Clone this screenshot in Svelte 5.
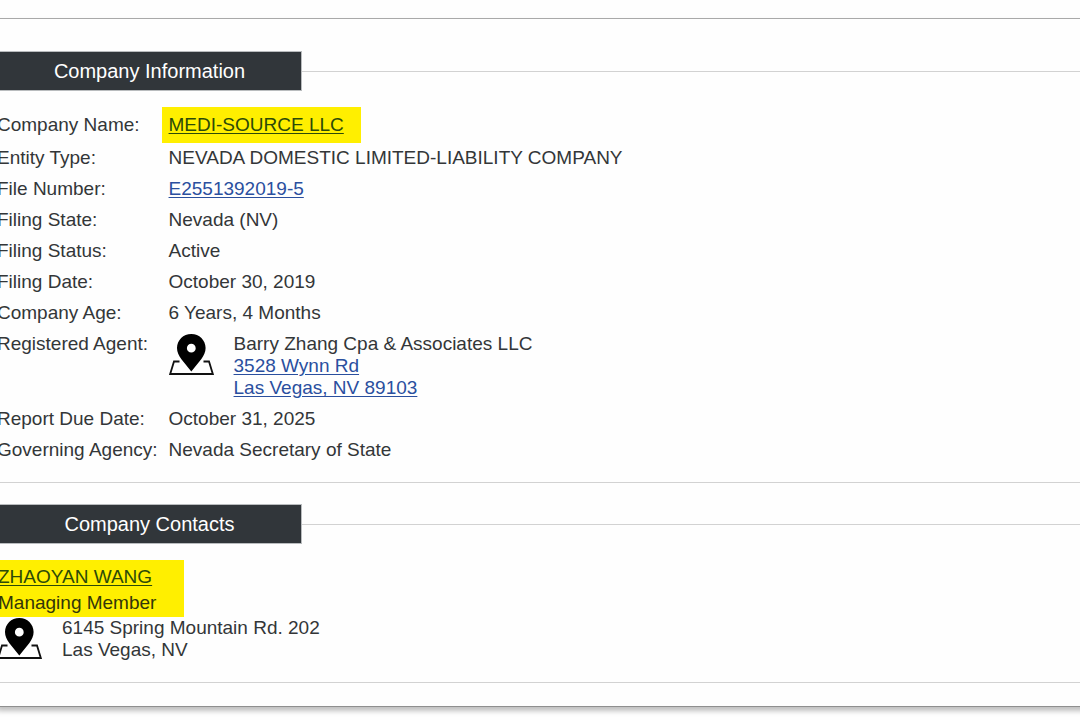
<script lang="ts">
  type Row = {
    label: string
    value?: string
    href?: string
    marked?: boolean
    agent?: { name: string; address: string[] }
  }

  const rows: Row[] = [
    { label: 'Company Name:', value: 'MEDI-SOURCE LLC', href: '#company', marked: true },
    { label: 'Entity Type:', value: 'NEVADA DOMESTIC LIMITED-LIABILITY COMPANY' },
    { label: 'File Number:', value: 'E2551392019-5', href: '#file' },
    { label: 'Filing State:', value: 'Nevada (NV)' },
    { label: 'Filing Status:', value: 'Active' },
    { label: 'Filing Date:', value: 'October 30, 2019' },
    { label: 'Company Age:', value: '6 Years, 4 Months' },
    {
      label: 'Registered Agent:',
      agent: {
        name: 'Barry Zhang Cpa & Associates LLC',
        address: ['3528 Wynn Rd', 'Las Vegas, NV 89103']
      }
    },
    { label: 'Report Due Date:', value: 'October 31, 2025' },
    { label: 'Governing Agency:', value: 'Nevada Secretary of State' }
  ]

  const contact = {
    name: 'ZHAOYAN WANG',
    role: 'Managing Member',
    address: ['6145 Spring Mountain Rd. 202', 'Las Vegas, NV']
  }
</script>

{#snippet pin()}
  <svg class="pin" viewBox="0 0 45 41" aria-hidden="true">
    <path d="M10.5 27.5H5L1.2 40H43.8L40 27.5H34.5" fill="none" stroke="#111" stroke-width="1.8" />
    <path
      fill="#000"
      fill-rule="evenodd"
      d="M22.3 0C14.3 0 8 6.2 8 14c0 4.2 1.8 7.6 4.4 11.2L22.3 37.5l9.9-12.3C34.8 21.6 36.6 18.2 36.6 14 36.6 6.2 30.3 0 22.3 0zm0 9.8a4.4 4.4 0 1 1 0 8.8 4.4 4.4 0 0 1 0-8.8z"
    />
  </svg>
{/snippet}

<main class="panel">
  <section>
    <div class="heading">
      <h2>Company Information</h2>
    </div>
    <table>
      <tbody>
        {#each rows as row}
          <tr>
            <th scope="row">{row.label}</th>
            <td>
              {#if row.agent}
                <div class="location">
                  {@render pin()}
                  <div>
                    {row.agent.name}
                    {#each row.agent.address as line}
                      <br /><a href="#map">{line}</a>
                    {/each}
                  </div>
                </div>
              {:else if row.marked}
                <mark class="name-mark"><a href={row.href}>{row.value}</a></mark>
              {:else if row.href}
                <a href={row.href}>{row.value}</a>
              {:else}
                {row.value}
              {/if}
            </td>
          </tr>
        {/each}
      </tbody>
    </table>
  </section>

  <section>
    <div class="heading">
      <h2>Company Contacts</h2>
    </div>
    <mark class="contact-mark">
      <a href="#contact">{contact.name}</a><br />
      {contact.role}
    </mark>
    <div class="location">
      {@render pin()}
      <address>
        {contact.address[0]}<br />
        {contact.address[1]}
      </address>
    </div>
  </section>
</main>

<style>
  :global(body) {
    background: #fefefe;
    overflow: hidden;
  }

  .panel {
    margin: 18px -10px 14px -3px;
    padding-bottom: 23px;
    border-top: 1px solid #a9a9a9;
    border-bottom: 1px solid #8f8f8f;
    background: #fefefe;
    box-shadow: 0 4px 5px rgba(0, 0, 0, 0.25);
    color: #333638;
    font-family: 'Liberation Sans', Arial, Helvetica, sans-serif;
    font-size: 19px;
    line-height: 22px;
  }

  section {
    padding: 32px 0 12px;
    border-bottom: 1px solid #d2d2d2;
  }

  section + section {
    padding: 21px 0 21px;
  }

  .heading {
    display: flex;
    align-items: center;
  }

  .heading::after {
    content: '';
    flex: 1;
    border-top: 1px solid #d2d2d2;
  }

  h2 {
    box-sizing: border-box;
    width: 305px;
    margin: 0;
    padding: 8px 12px;
    border: 1px solid #b9bcbe;
    background: #31363a;
    color: #fff;
    font-size: 20px;
    font-weight: 400;
    line-height: 22px;
    text-align: center;
  }

  table {
    margin-top: 23px;
    border-collapse: collapse;
  }

  th,
  td {
    padding: 0 0 9px;
    font-weight: 400;
    text-align: left;
    vertical-align: top;
  }

  th {
    padding-right: 11px;
    white-space: nowrap;
  }

  a {
    color: #2a4f9e;
    text-decoration: underline;
    text-underline-offset: 2px;
  }

  mark {
    background: #ffef00;
    color: #33360a;
  }

  mark a {
    color: #2c4a08;
  }

  .name-mark {
    display: inline-block;
    margin: -7px -7px -5px;
    padding: 7px 17px 7px 7px;
  }

  .contact-mark {
    display: block;
    width: 187px;
    margin-top: 16px;
    padding: 4px 0 1px 1px;
    box-sizing: border-box;
    line-height: 26px;
  }

  .location {
    display: flex;
    align-items: flex-start;
    gap: 20px;
  }

  address {
    font-style: normal;
  }

  .pin {
    flex: none;
    width: 45px;
    height: 41px;
    margin-top: 1px;
  }
</style>
